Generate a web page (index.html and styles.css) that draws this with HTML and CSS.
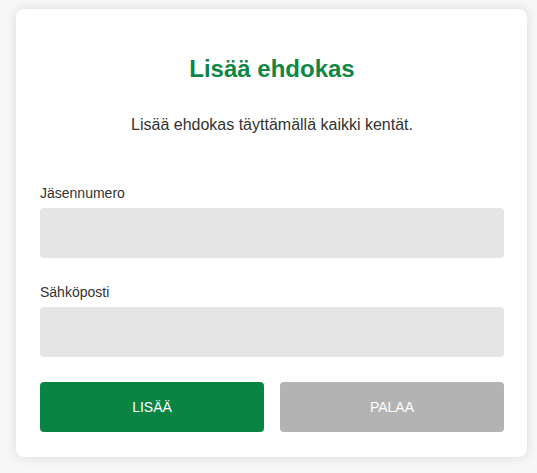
FILE: index.html
```html
<!DOCTYPE html>
<html lang="fi">
<head>
  <meta charset="UTF-8">
  <meta name="viewport" content="width=device-width, initial-scale=1.0">
  <title>Lisää ehdokas</title>
  <link rel="stylesheet" href="styles.css">
</head>
<body>
  <div class="container">
    <h1>Lisää ehdokas</h1>
    <p class="intro">Lisää ehdokas täyttämällä kaikki kentät.</p>

    <!-- Lomake -->
    <form class="form" id="candidate-form">
      <label for="member-no">Jäsennumero</label>
      <input type="text" id="member-no">

      <label for="email">Sähköposti</label>
      <input type="email" id="email">

      <div class="actions">
        <button type="submit" class="add-btn">LISÄÄ</button>
        <button type="button" class="back-btn">PALAA</button>
      </div>
    </form>
  </div>
</body>
</html>
```

FILE: styles.css
```css
body {
  font-family: "Liberation Sans", Arial, sans-serif;
  margin: 0;
  padding: 9px 10px 16px 16px;
  background: #f7f7f7;
}

.container {
  background: white;
  padding: 24px 23px 25px 24px;
  border-radius: 8px;
  box-shadow: 0 0 12px rgba(0, 0, 0, 0.12);
}

h1 {
  margin: 22px 0 0;
  font-size: 24px;
  line-height: 28px;
  text-align: center;
  color: #0f8646;
}

.intro {
  margin: 33px 0 0;
  font-size: 16px;
  line-height: 18px;
  text-align: center;
  color: #333;
}

.form {
  display: flex;
  flex-direction: column;
  margin-top: 51px;
}

label {
  font-size: 14px;
  line-height: 16px;
  color: #333;
  margin-bottom: 7px;
}

input {
  height: 50px;
  border: none;
  border-radius: 4px;
  background: #e5e5e5;
  padding: 0 12px;
  font-size: 14px;
  margin-bottom: 26px;
  box-sizing: border-box;
}

.actions {
  display: flex;
  gap: 16px;
  margin-top: -1px;
}

button {
  flex: 1;
  height: 50px;
  border: none;
  border-radius: 4px;
  color: white;
  font-family: inherit;
  font-size: 14px;
  cursor: pointer;
}

.add-btn {
  background: #0a8442;
}

.back-btn {
  background: #b3b3b3;
}
```
